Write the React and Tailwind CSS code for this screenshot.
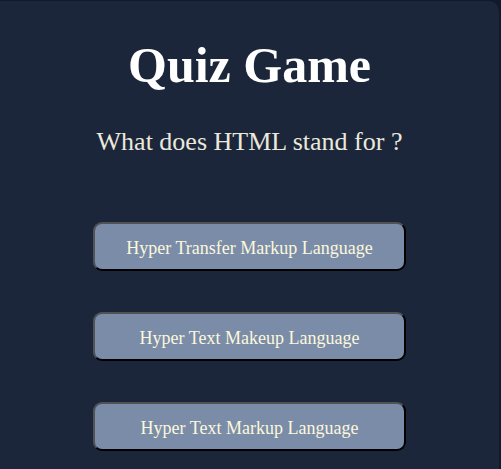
import React from "react";

const options = [
    "Hyper Transfer Markup Language",
    "Hyper Text Makeup Language",
    "Hyper Text Markup Language",
];

function App() {
    return (
        <div className="min-h-screen bg-[#111a2b] pt-px pr-[2px] overflow-hidden" style={{ fontFamily: '"Liberation Serif", "Times New Roman", serif' }}>
            <div className="min-h-[480px] bg-[#1c263b] rounded-tr-[10px] flex flex-col items-center pt-[36px]">
                <h1 className="text-[50px] font-bold text-white leading-[1.15]">Quiz Game</h1>
                <p className="mt-[32px] text-[26px] text-[#ebe9dc] leading-[1.15]">What does HTML stand for ?</p>

                <div className="mt-[66px] flex flex-col gap-[41px]">
                    {options.map((opt) => (
                        <button
                            key={opt}
                            type="button"
                            className="w-[313px] h-[49px] pt-[3px] bg-[#7b8ca8] text-[#fbf8dc] text-[18px] rounded-[9px] border-2 border-t-[#505256] border-l-[#505256] border-b-black border-r-black"
                        >
                            {opt}
                        </button>
                    ))}
                </div>
            </div>
        </div>
    );
}

export default App;
